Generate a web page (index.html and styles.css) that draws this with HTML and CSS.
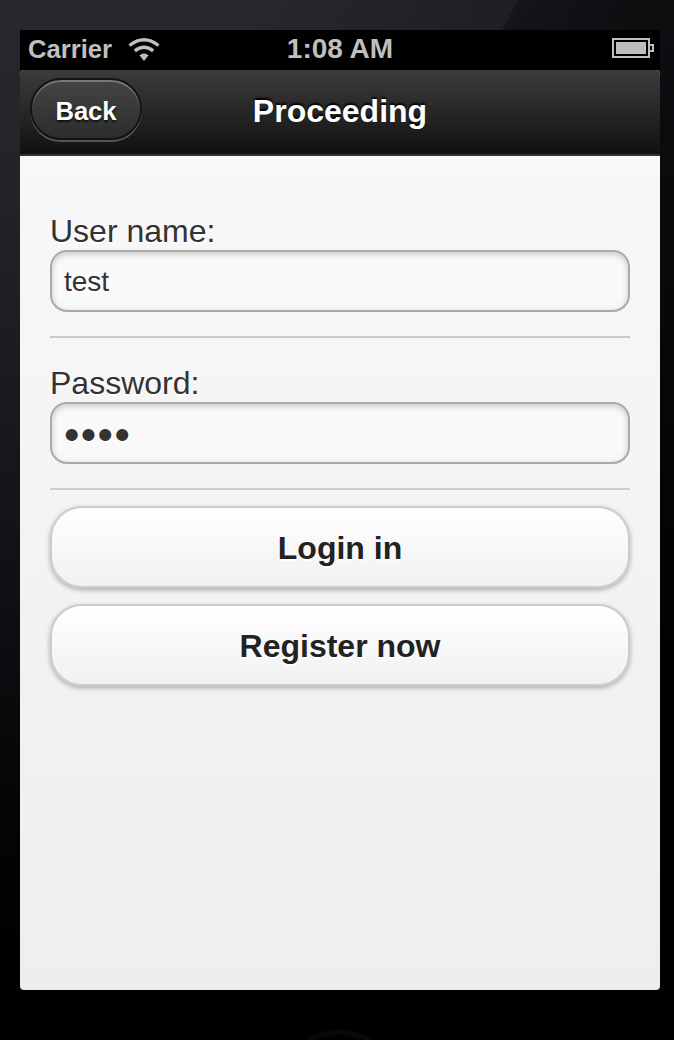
FILE: index.html
```html
<!DOCTYPE html>
<html lang="en">
<head>
<meta charset="utf-8">
<title>Proceeding</title>
<link rel="stylesheet" href="styles.css">
</head>
<body>
<div class="device">
  <div class="screen">
    <div class="status">
      <div class="carrier">
        <span>Carrier</span>
        <svg class="wifi" width="32" height="24" viewBox="0 0 32 24" fill="none" stroke="#bfbfbf">
          <path d="M1.5 7.5Q16-3.8 30.5 7.5" stroke-width="3.4"/>
          <path d="M6.8 12.8Q16 5.6 25.2 12.8" stroke-width="3.4"/>
          <path d="M11.5 17.3Q16 13.6 20.5 17.3L16 23Z" fill="#bfbfbf" stroke="none"/>
        </svg>
      </div>
      <span class="time">1:08 AM</span>
      <svg class="battery" width="42" height="20" viewBox="0 0 42 20" fill="none" stroke="#bfbfbf" stroke-width="2">
        <path d="M1 1H37V19H1Z"/>
        <path d="M38 7H41V13H38"/>
        <path d="M4 4H34V16H4Z" fill="#bfbfbf" stroke="none"/>
      </svg>
    </div>
    <div class="page">
      <header class="header">
        <a class="back">Back</a>
        <h1 class="title">Proceeding</h1>
      </header>
      <main class="content">
        <div class="field">
          <label class="label">User name:</label>
          <div class="input">test</div>
        </div>
        <div class="field">
          <label class="label">Password:</label>
          <div class="input"><span class="dots">••••</span></div>
        </div>
        <div class="actions">
          <button class="button">Login in</button>
          <button class="button">Register now</button>
        </div>
      </main>
    </div>
  </div>
  <div class="home"></div>
</div>
</body>
</html>
```
FILE: styles.css
```css
* { box-sizing: border-box; }
body { margin: 0; font-family: "Liberation Sans", Arial, sans-serif; }
.device {
  position: relative;
  width: 674px;
  height: 1040px;
  padding: 30px 14px 50px 20px;
  overflow: hidden;
  background:
    linear-gradient(to bottom, transparent 0, #000 700px) right / 14px 100% no-repeat,
    linear-gradient(119deg, transparent 452px, #141519 455px, #0e0e11 560px) 0 0 / 674px 30px no-repeat,
    linear-gradient(to right, transparent 0 660px, #0d0e11 660px),
    linear-gradient(to right, transparent 240px, rgba(29, 30, 33, .9) 500px) 0 0 / 674px 30px no-repeat,
    linear-gradient(to bottom, #28292f 0, #23242a 180px, #1c1d21 340px, #111216 560px, #060608 780px, #000 960px);
}
.home {
  position: absolute;
  left: 277px;
  top: 1028px;
  width: 124px;
  height: 124px;
  border-radius: 50%;
  background: radial-gradient(circle closest-side, #000 0 53px, #0b0b0b 58px, #000 62px);
}
.screen { height: 960px; background: #000; }
.status {
  display: grid;
  grid-template-columns: 1fr auto 1fr;
  align-items: center;
  height: 40px;
  padding: 0 6px 0 8px;
  color: #bfbfbf;
  font-weight: bold;
  line-height: 38px;
}
.carrier { display: flex; align-items: center; gap: 16px; padding-bottom: 2px; font-size: 25.6px; }
.wifi { margin-top: 1px; }
.time { font-size: 28px; padding: 0 2px 2px 0; }
.battery { justify-self: end; margin-bottom: 4px; }
.page {
  height: 920px;
  overflow: hidden;
  border-radius: 4px;
  background: linear-gradient(#f9f9f9, #eee);
}
.header {
  display: grid;
  grid-template-columns: 112px 1fr 112px;
  align-items: start;
  height: 86px;
  padding: 8px 10px 0;
  border-bottom: 2px solid #333;
  background: linear-gradient(#3c3c3c, #111);
  color: #fff;
  font-weight: bold;
}
.back {
  height: 62px;
  border: 2px solid #141414;
  border-radius: 32px;
  background: linear-gradient(#444, #2d2d2d);
  box-shadow: 0 2px 0 rgba(255, 255, 255, .27), inset 0 2px 0 rgba(255, 255, 255, .28);
  font-size: 25.6px;
  line-height: 63px;
  text-align: center;
  text-shadow: 0 2px 2px #111;
}
.title {
  margin: 0;
  font-size: 32px;
  line-height: 66px;
  text-align: center;
  text-shadow: 0 -2px 2px #000;
}
.content { padding: 56px 30px 0; color: #333; text-shadow: 0 2px 0 #fff; }
.field { height: 126px; margin-bottom: 26px; border-bottom: 2px solid #ccc; }
.label { display: block; font-size: 32px; line-height: 38px; }
.input {
  display: flex;
  align-items: center;
  height: 62px;
  padding: 1px 12px 0;
  border: 2px solid #aaa;
  border-radius: 17px;
  background: #f9f9f9;
  box-shadow: inset 0 2px 6px rgba(0, 0, 0, .2);
  font-size: 28px;
}
.dots { font-size: 44px; letter-spacing: 1.4px; line-height: 50px; padding-top: 2px; }
.actions { display: grid; gap: 16px; margin-top: -10px; }
.button {
  height: 82px;
  padding: 3px 0 0;
  border: 2px solid #ccc;
  border-radius: 32px;
  background: linear-gradient(#fff, #f1f1f1);
  box-shadow: 0 2px 5px rgba(0, 0, 0, .3);
  color: #222;
  font: bold 32px "Liberation Sans", Arial, sans-serif;
  text-shadow: 0 2px 0 #fff;
}
```
